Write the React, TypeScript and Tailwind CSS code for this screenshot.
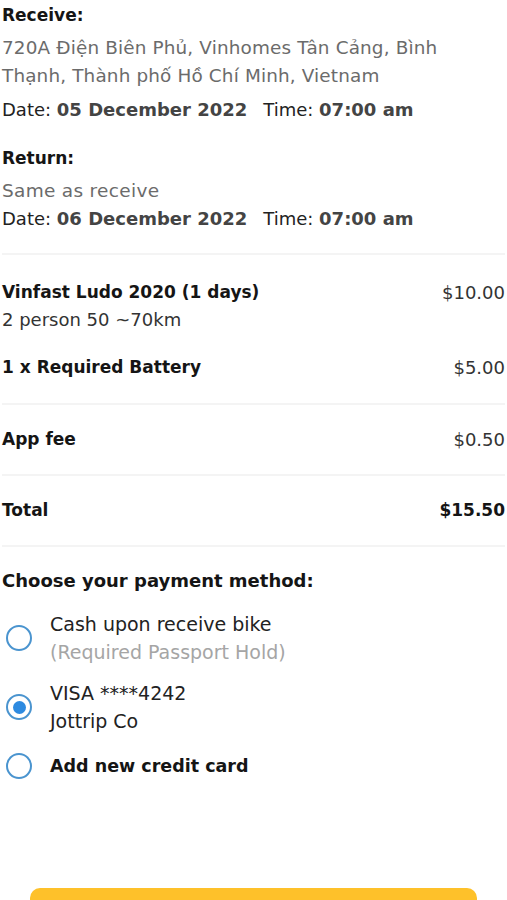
import React from "react";

const Divider = () => <div className="h-[2px] bg-[#f4f4f4]" />;

const Radio = ({ checked }: { checked?: boolean }) => (
  <span className="flex h-[26px] w-[26px] shrink-0 items-center justify-center rounded-full border-[2.5px] border-[#4a94cf]">
    {checked && <span className="h-[13px] w-[13px] rounded-full bg-[#2d8ae0]" />}
  </span>
);

const Row = ({ label, price, bold }: { label: string; price: string; bold?: boolean }) => (
  <div className="flex items-center justify-between">
    <span className="text-[17px] font-semibold text-[#151515]">{label}</span>
    <span className={bold ? "text-[17px] font-bold text-[#151515]" : "text-[18px] text-[#333]"}>{price}</span>
  </div>
);

const App = () => {
  return (
    <div className="h-[900px] overflow-hidden bg-white px-[2px] font-['DejaVu_Sans',sans-serif]">
      <section className="pt-[3px]">
        <h2 className="text-[17px] font-semibold leading-[24px] text-[#151515]">Receive:</h2>
        <p className="mt-[7px] text-[18.4px] leading-[28px] tracking-[0.15px] text-[#6b6b6b]">
          720A Điện Biên Phủ, Vinhomes Tân Cảng, Bình Thạnh, Thành phố Hồ Chí Minh, Vietnam
        </p>
        <p className="mt-[6px] text-[18px] leading-[28px] text-[#222]">
          Date: <span className="font-semibold text-[#444]">05 December 2022</span>
          <span className="ml-4">Time: </span>
          <span className="font-semibold text-[#444]">07:00 am</span>
        </p>

        <h2 className="mt-[22px] text-[17px] font-semibold leading-[24px] text-[#151515]">Return:</h2>
        <p className="mt-[7px] text-[18.5px] leading-[28px] tracking-[0.3px] text-[#6b6b6b]">Same as receive</p>
        <p className="text-[18px] leading-[28px] text-[#222]">
          Date: <span className="font-semibold text-[#444]">06 December 2022</span>
          <span className="ml-4">Time: </span>
          <span className="font-semibold text-[#444]">07:00 am</span>
        </p>
      </section>

      <div className="mt-[20px]">
        <Divider />
      </div>

      <section className="pt-[24px] pb-[22px]">
        <Row label="Vinfast Ludo 2020 (1 days)" price="$10.00" />
        <p className="text-[18px] leading-[28px] text-[#333]">2 person 50 ~70km</p>
        <div className="mt-[20px]">
          <Row label="1 x Required Battery" price="$5.00" />
        </div>
      </section>

      <Divider />
      <div className="flex h-[69px] flex-col justify-center">
        <Row label="App fee" price="$0.50" />
      </div>
      <Divider />
      <div className="flex h-[69px] flex-col justify-center">
        <Row label="Total" price="$15.50" bold />
      </div>
      <Divider />

      <section className="pt-[22px]">
        <h2 className="text-[18px] font-semibold leading-[24px] text-[#151515]">Choose your payment method:</h2>

        <div className="mt-[17px] flex items-center gap-[18px] pl-[4px]">
          <Radio />
          <div className="text-[19px] leading-[28px]">
            <div className="text-[#222]">Cash upon receive bike</div>
            <div className="text-[#a5a5a5]">(Required Passport Hold)</div>
          </div>
        </div>

        <div className="mt-[13px] flex items-center gap-[18px] pl-[4px]">
          <Radio checked />
          <div className="text-[19px] leading-[28px] text-[#222]">
            <div>VISA ****4242</div>
            <div>Jottrip Co</div>
          </div>
        </div>

        <div className="mt-[17px] flex items-center gap-[18px] pl-[4px]">
          <Radio />
          <div className="text-[17.5px] font-semibold leading-[28px] text-[#151515]">Add new credit card</div>
        </div>
      </section>

      <div className="mt-[108px] px-[28px]">
        <button className="h-[52px] w-full rounded-[10px] bg-[#fec12a]" />
      </div>
    </div>
  );
};

export default App;
